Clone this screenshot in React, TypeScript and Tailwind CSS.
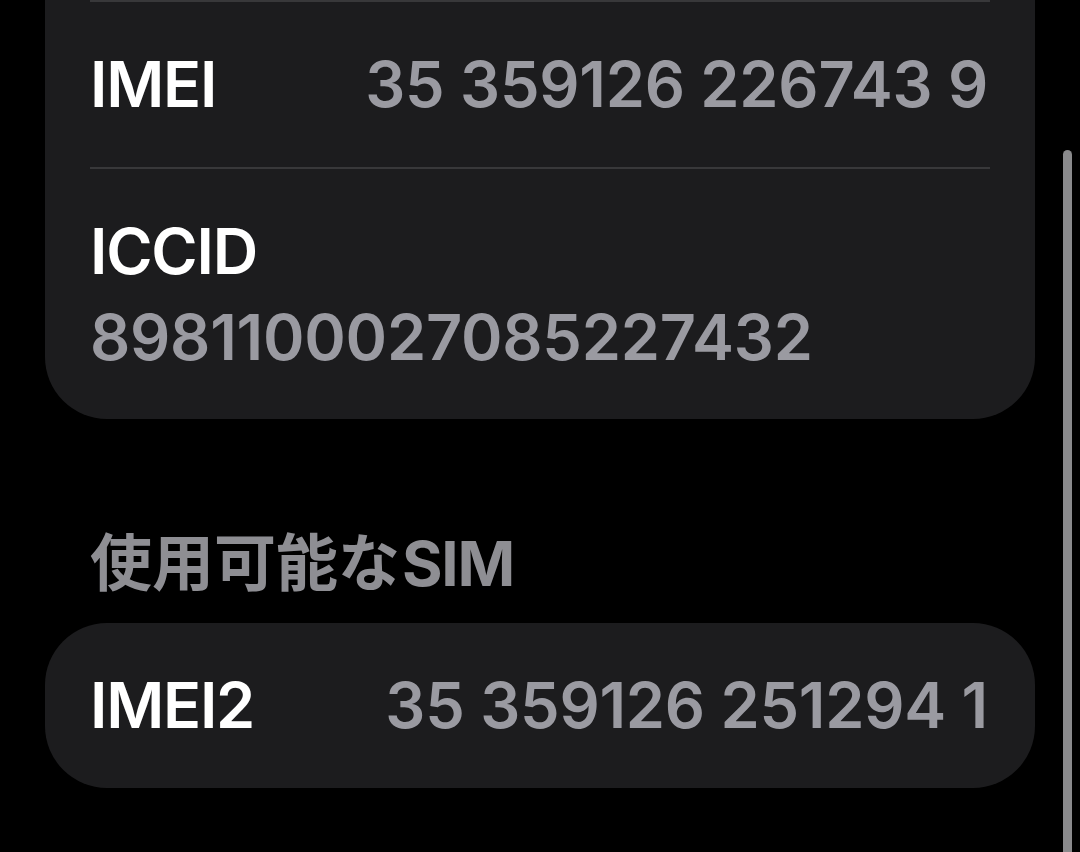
import React from "react";

const font = { fontFamily: 'Inter, "Noto Sans CJK JP", sans-serif' };

export default function App() {
  return (
    <div
      className="relative w-[1080px] h-[852px] overflow-hidden bg-black"
      style={font}
    >
      <div className="ml-[45px] w-[990px] bg-[#1c1c1e] rounded-b-[62px] px-[45px]">
        <div className="h-[2px] bg-[#38383a]" />
        <div className="h-[165px] flex items-center justify-between">
          <span className="text-[63px] leading-none font-semibold text-white tracking-[-0.02em]">IMEI</span>
          <span className="text-[63px] leading-none font-semibold text-[#9a9aa1] tracking-[-0.004em] pr-[2px]">35 359126 226743 9</span>
        </div>
        <div className="h-[2px] bg-[#38383a]" />
        <div className="pt-[50px] pb-[50px] flex flex-col gap-[22px]">
          <span className="text-[63px] leading-[64px] font-semibold text-white tracking-[-0.02em]">ICCID</span>
          <span className="text-[63px] leading-[64px] font-semibold text-[#9a9aa1] tracking-[-0.004em]">8981100027085227432</span>
        </div>
      </div>

      <div className="mt-[110px] ml-[90px] text-[62px] leading-[70px] font-bold text-[#8e8e93]">
        使用可能な<span className="ml-[2px] tracking-[-0.02em]">SIM</span>
      </div>

      <div className="mt-[24px] ml-[45px] w-[990px] h-[165px] bg-[#1c1c1e] rounded-[62px] px-[45px] flex items-center justify-between">
        <span className="text-[63px] leading-none font-semibold text-white tracking-[-0.02em]">IMEI2</span>
        <span className="text-[63px] leading-none font-semibold text-[#9a9aa1] tracking-[-0.004em] pr-[2px]">35 359126 251294 1</span>
      </div>

      <div className="absolute left-[1063px] top-[150px] w-[9px] h-[720px] rounded-full bg-[#8a8a8c]" />
    </div>
  );
}
